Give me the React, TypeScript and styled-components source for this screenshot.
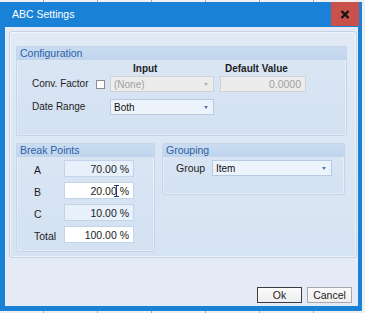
import React from "react";
import styled, { createGlobalStyle } from "styled-components";

const Global = createGlobalStyle`
  html, body { margin: 0; padding: 0; }
  body {
    width: 365px;
    height: 313px;
    overflow: hidden;
    background-color: #f0f0f0;
    background-image: repeating-linear-gradient(90deg, transparent 0 43px, #a8a8a8 43px 44px, transparent 44px 54px);
    font-family: "Liberation Sans", Arial, sans-serif;
    font-size: 10px;
    color: #1b1b1b;
  }
  #root { padding-top: 2px; }
`;

const Window = styled.div`
  width: 362px;
  height: 309px;
  background: #1a82d6;
  display: flex;
  flex-direction: column;
  box-sizing: border-box;
  padding: 0 4px 5px 5px;
`;

const TitleBar = styled.div`
  height: 25px;
  display: flex;
  align-items: center;
  justify-content: space-between;
  margin-left: -5px;
  margin-right: -4px;
  padding-left: 12px;
`;

const Title = styled.span`
  color: #ffffff;
  font-size: 10.5px;
  font-family: "Liberation Sans", Arial, sans-serif;
  margin-top: -1px;
`;

const CloseButton = styled.div`
  width: 28px;
  height: 24px;
  margin-right: 3px;
  align-self: flex-start;
  background: #c8524b;
  display: flex;
  align-items: center;
  justify-content: center;
`;

const Client = styled.div`
  flex: 1;
  background: #e4ebf6;
  display: flex;
  flex-direction: column;
  padding: 4px 1px 3px 4px;
`;

const Panel = styled.div`
  height: 227px;
  box-sizing: border-box;
  border: 1px solid #c3d2e7;
  border-radius: 3px;
  background: linear-gradient(#e1eaf6, #d6e3f2);
  box-shadow: inset 0 0 0 1px rgba(255,255,255,0.55);
  padding: 14px 9px 5px 6px;
  display: flex;
  flex-direction: column;
  gap: 7px;
`;

const GroupBox = styled.div<{ $w?: number; $h: number }>`
  box-sizing: border-box;
  width: ${(p) => (p.$w ? `${p.$w}px` : "auto")};
  height: ${(p) => p.$h}px;
  border: 1px solid #c6d5ea;
  border-radius: 2px;
  background: linear-gradient(#dbe6f4, #d3e1f1);
  box-shadow: inset 0 0 0 1px rgba(255,255,255,0.35);
  display: flex;
  flex-direction: column;
`;

const GroupHeader = styled.div`
  height: 13px;
  background: linear-gradient(#c9dcf1, #bfd4ec);
  color: #2d5fa8;
  font-size: 10.5px;
  line-height: 13px;
  padding-left: 3px;
`;

const ConfigGrid = styled.div`
  display: grid;
  grid-template-columns: 63px 15px 104px 86px;
  grid-template-rows: 16px 16px 23px;
  padding: 0 0 0 15px;
  align-items: end;
  & > :nth-child(4n) { margin-left: 6px; }
`;

const ColHead = styled.div<{ $indent: number }>`
  align-self: center;
  font-weight: bold;
  font-size: 10px;
  padding-left: ${(p) => p.$indent}px;
  color: #1e1e1e;
`;

const Label = styled.div`
  font-size: 10px;
  line-height: 16px;
  color: #1e1e1e;
`;

const Check = styled.div`
  align-self: center;
  width: 7px;
  height: 7px;
  border: 1px solid #8c8c8c;
  background: #ffffff;
  margin-left: 1px;
`;

const Combo = styled.div<{ $disabled?: boolean; $w?: number }>`
  box-sizing: border-box;
  height: 16px;
  width: ${(p) => (p.$w ? `${p.$w}px` : "auto")};
  border: 1px solid ${(p) => (p.$disabled ? "#d2d2d2" : "#b8cae3")};
  background: ${(p) => (p.$disabled ? "#ececec" : "#edf3fb")};
  color: ${(p) => (p.$disabled ? "#a0a0a0" : "#111111")};
  display: flex;
  align-items: center;
  justify-content: space-between;
  padding: 0 5px 0 3px;
  font-size: 10px;
`;

const Arrow = styled.span<{ $disabled?: boolean }>`
  width: 0;
  height: 0;
  border-left: 2.5px solid transparent;
  border-right: 2.5px solid transparent;
  border-top: 3px solid ${(p) => (p.$disabled ? "#b0b0b0" : "#5a76a8")};
`;

const TextBox = styled.div<{ $disabled?: boolean; $white?: boolean; $w: number; $h?: number }>`
  box-sizing: border-box;
  position: relative;
  height: ${(p) => p.$h ?? 17}px;
  width: ${(p) => p.$w}px;
  border: 1px solid ${(p) => (p.$disabled ? "#d2d2d2" : "#c3d3ea")};
  background: ${(p) => (p.$disabled ? "#ececec" : p.$white ? "#ffffff" : "#e7f0fb")};
  color: ${(p) => (p.$disabled ? "#a0a0a0" : "#1b1b1b")};
  display: flex;
  align-items: center;
  justify-content: flex-end;
  padding-right: 4px;
  font-size: 10.5px;
`;

const BottomRow = styled.div`
  display: flex;
  gap: 7px;
`;

const BreakGrid = styled.div`
  display: grid;
  grid-template-columns: 30px 70px;
  grid-auto-rows: 17px;
  row-gap: 5px;
  padding: 3px 0 0 17px;
  align-items: center;
`;

const GroupRow = styled.div`
  display: flex;
  align-items: center;
  padding: 3px 0 0 13px;
`;

const GroupLabel = styled(Label)`
  width: 36px;
  font-size: 10.5px;
`;

const BreakLabel = styled(Label)`
  font-size: 10.5px;
  margin-top: 3px;
`;

const Spacer = styled.div`
  flex: 1;
`;

const Buttons = styled.div`
  display: flex;
  justify-content: flex-end;
  gap: 5px;
  padding-right: 5px;
`;

const Button = styled.button<{ $default?: boolean }>`
  box-sizing: border-box;
  width: 45px;
  height: 16px;
  padding: 0;
  border: 1px solid ${(p) => (p.$default ? "#3c3c3c" : "#a9a9a9")};
  background: linear-gradient(#fafafa, #eeeeee);
  font-family: "Liberation Sans", Arial, sans-serif;
  font-size: 10.5px;
  color: #1b1b1b;
  display: flex;
  align-items: center;
  justify-content: center;
`;

const Caret = styled.svg`
  position: absolute;
  left: 49px;
  top: 2px;
`;

export default function App() {
  return (
    <>
      <Global />
      <Window>
        <TitleBar>
          <Title>ABC Settings</Title>
          <CloseButton>
            <svg width="10" height="9" viewBox="0 0 10 9">
              <path d="M1.5 1 L8.5 8 M8.5 1 L1.5 8" stroke="#111" strokeWidth="2.2" />
            </svg>
          </CloseButton>
        </TitleBar>
        <Client>
          <Panel>
            <GroupBox $h={90}>
              <GroupHeader>Configuration</GroupHeader>
              <ConfigGrid>
                <div />
                <div />
                <ColHead $indent={23}>Input</ColHead>
                <ColHead $indent={5}>Default Value</ColHead>
                <Label>Conv. Factor</Label>
                <Check />
                <Combo $disabled>
                  (None)
                  <Arrow $disabled />
                </Combo>
                <TextBox $disabled $w={86} $h={16}>0.0000</TextBox>
                <Label>Date Range</Label>
                <div />
                <Combo>
                  Both
                  <Arrow />
                </Combo>
                <div />
              </ConfigGrid>
            </GroupBox>
            <BottomRow>
              <GroupBox $w={139} $h={109}>
                <GroupHeader>Break Points</GroupHeader>
                <BreakGrid>
                  <BreakLabel>A</BreakLabel>
                  <TextBox $w={70}>70.00 %</TextBox>
                  <BreakLabel>B</BreakLabel>
                  <TextBox $w={70} $white>
                    20.00 %
                    <Caret width="5" height="12" viewBox="0 0 5 12">
                      <path d="M0 0.5 H5 M2.5 0.5 V11.5 M0 11.5 H5" stroke="#1d3c7a" strokeWidth="1" />
                    </Caret>
                  </TextBox>
                  <BreakLabel>C</BreakLabel>
                  <TextBox $w={70}>10.00 %</TextBox>
                  <BreakLabel>Total</BreakLabel>
                  <TextBox $w={70} $white>100.00 %</TextBox>
                </BreakGrid>
              </GroupBox>
              <GroupBox $w={183} $h={52}>
                <GroupHeader>Grouping</GroupHeader>
                <GroupRow>
                  <GroupLabel>Group</GroupLabel>
                  <Combo $w={120}>
                    Item
                    <Arrow />
                  </Combo>
                </GroupRow>
              </GroupBox>
            </BottomRow>
          </Panel>
          <Spacer />
          <Buttons>
            <Button $default>Ok</Button>
            <Button>Cancel</Button>
          </Buttons>
        </Client>
      </Window>
    </>
  );
}
